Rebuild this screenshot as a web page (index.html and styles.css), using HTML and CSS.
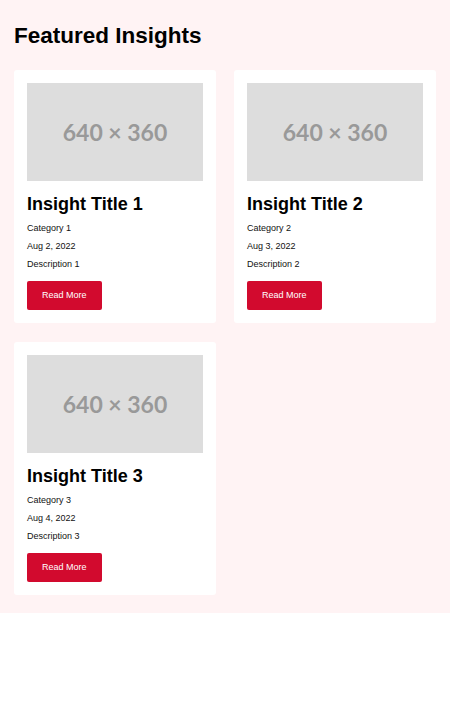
FILE: index.html
```html
<!DOCTYPE html>
<html lang="en">
<head>
<meta charset="utf-8">
<title>Featured Insights</title>
<link rel="stylesheet" href="styles.css">
</head>
<body>
<section class="insights">
  <h2 class="insights-title">Featured Insights</h2>
  <div class="insights-grid">
    <article class="card">
      <div class="card-img"><span>640 × 360</span></div>
      <h3 class="card-title">Insight Title 1</h3>
      <p class="card-meta">Category 1</p>
      <p class="card-meta">Aug 2, 2022</p>
      <p class="card-meta">Description 1</p>
      <a class="btn" href="#">Read More</a>
    </article>
    <article class="card">
      <div class="card-img"><span>640 × 360</span></div>
      <h3 class="card-title">Insight Title 2</h3>
      <p class="card-meta">Category 2</p>
      <p class="card-meta">Aug 3, 2022</p>
      <p class="card-meta">Description 2</p>
      <a class="btn" href="#">Read More</a>
    </article>
    <article class="card">
      <div class="card-img"><span>640 × 360</span></div>
      <h3 class="card-title">Insight Title 3</h3>
      <p class="card-meta">Category 3</p>
      <p class="card-meta">Aug 4, 2022</p>
      <p class="card-meta">Description 3</p>
      <a class="btn" href="#">Read More</a>
    </article>
  </div>
</section>
</body>
</html>
```
FILE: styles.css
```css
* { box-sizing: border-box; }
body {
  margin: 0;
  background: #ffffff;
  font-family: "Liberation Sans", Arial, sans-serif;
  color: #000;
}
.insights {
  background: #fff3f4;
  padding: 14px 14px 18px;
}
.insights-title {
  margin: 9px 0 21px;
  font-size: 22.5px;
  line-height: 26px;
  font-weight: 700;
}
.insights-grid {
  display: grid;
  grid-template-columns: 1fr 1fr;
  column-gap: 18px;
  row-gap: 19px;
}
.card {
  background: #fff;
  border-radius: 3px;
  padding: 13px;
  display: flex;
  flex-direction: column;
  align-items: flex-start;
}
.card-img {
  width: 100%;
  height: 98px;
  background: #dddddd;
  display: flex;
  align-items: center;
  justify-content: center;
}
.card-img span {
  font-family: Lato, "Open Sans", sans-serif;
  font-size: 23px;
  font-weight: 700;
  color: #999999;
}
.card-title {
  margin: 12px 0 4px;
  font-size: 18px;
  line-height: 22px;
  font-weight: 700;
}
.card-meta {
  margin: 0;
  font-size: 9px;
  line-height: 18px;
  color: #111;
}
.btn {
  margin-top: 8px;
  display: inline-block;
  background: #d20a2e;
  color: #fff;
  text-decoration: none;
  font-size: 9px;
  line-height: 29px;
  height: 29px;
  padding: 0 15px;
  border-radius: 2px;
}
```
